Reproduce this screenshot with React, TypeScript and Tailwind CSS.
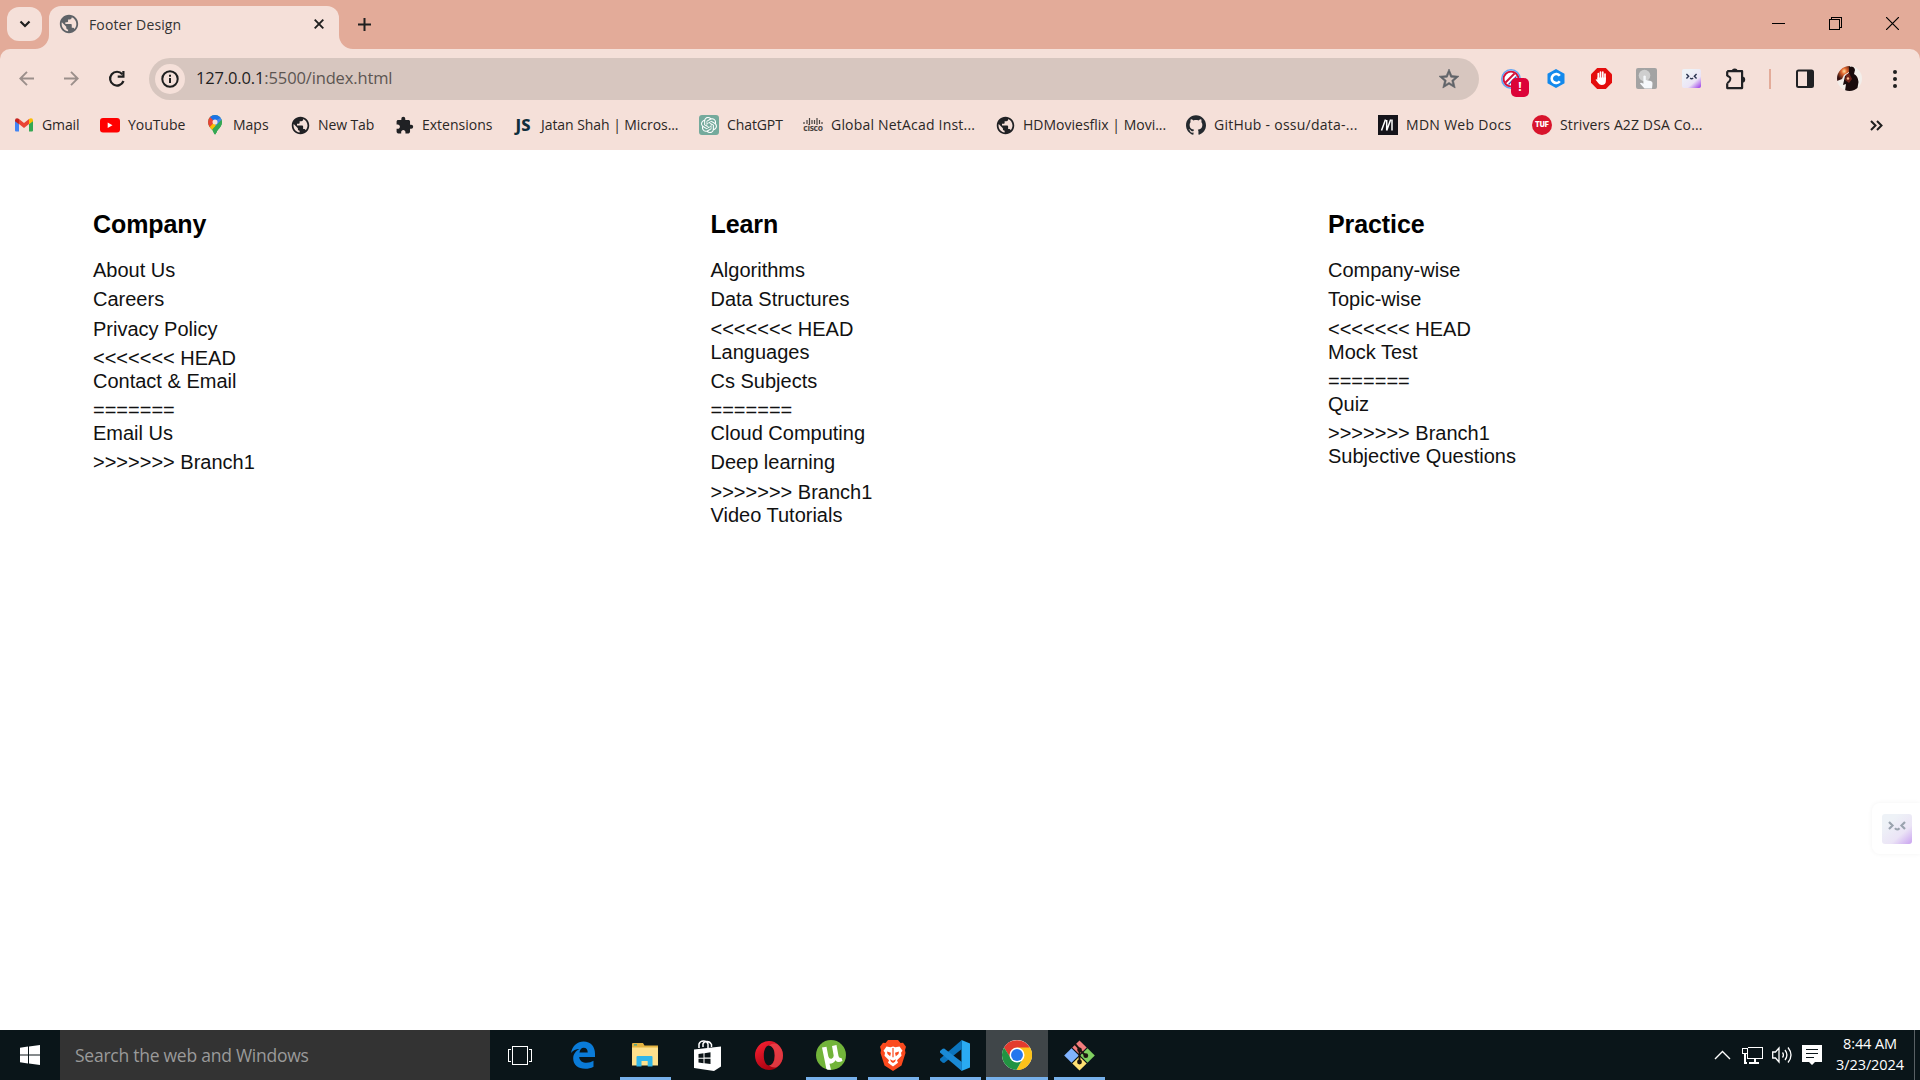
import type { ReactNode } from "react";
import { MdPublic, MdExtension, MdStarOutline } from "react-icons/md";
import { SiOpenai, SiGithub } from "react-icons/si";

/* ---------- bookmark icons ---------- */

const Gmail = () => (
  <svg width="18" height="14" viewBox="0 0 18 14">
    <path d="M0 2v10.6q0 1 1 1h3V6z" fill="#4285f4" />
    <path d="M18 2v10.6q0 1-1 1h-3V6z" fill="#34a853" />
    <path d="M4 1l5 4 5-4v5L9 10 4 6z" fill="#ea4335" />
    <path d="M0 2.4Q0 .3 2 .2 3 .2 4 1v5.2L0 3.2z" fill="#c5221f" />
    <path d="M18 2.4Q18 .3 16 .2 15 .2 14 1v5.2l4-3z" fill="#fbbc04" />
  </svg>
);
const YouTube = () => (
  <svg width="20" height="15" viewBox="0 0 20 15">
    <rect width="20" height="14.5" rx="3" fill="#f00" />
    <path d="M7.700 4.500v5.600l4.800-2.800z" fill="#fff" />
  </svg>
);
const Maps = () => (
  <svg width="14" height="20" viewBox="0 0 14 20">
    <defs>
      <clipPath id="pin">
        <path d="M7 0a7 7 0 0 1 7 7c0 3.500-2 5.500-3.800 7.600C8.600 16.500 8 19.500 7 19.500S5.400 16.500 3.800 14.600C2 12.500 0 10.500 0 7a7 7 0 0 1 7-7z" />
      </clipPath>
    </defs>
    <g clipPath="url(#pin)">
      <rect width="14" height="20" fill="#34a853" />
      <path d="M0 13L9 3l3 3-9 10H0z" fill="#fbbc04" />
      <path d="M0 0h3l4 6-6 7H0z" fill="#ea4335" />
      <path d="M2 2L7 7l6-5-3-3H4z" fill="#1a73e8" />
      <path d="M7 7l6-5 1 3-6 7z" fill="#4285f4" />
      <path d="M14 4L5 14l2 6h7z" fill="#34a853" />
    </g>
    <circle cx="7" cy="7" r="2.500" fill="#f5e0d9" />
  </svg>
);
const Gpt = () => (
  <span className="flex size-5 items-center justify-center rounded-[3px] bg-[#74aa9c]">
    <SiOpenai className="size-4 text-white" />
  </span>
);
const Cisco = () => (
  <span className="flex w-5 flex-col items-center">
    <svg width="20" height="7" viewBox="0 0 20 7">
      <path d="M1 4v2M4 2v4M6.500 0v7M9 2v4M11.500 2v4M14 0v7M16.500 2v4M19 4v2" stroke="#4a4441" strokeWidth="1.200" />
    </svg>
    <span className="-mt-px font-['Open_Sans',sans-serif] text-[8.500px] leading-[8px] font-bold tracking-[-0.300px] text-[#4a4441]">
      cisco
    </span>
  </span>
);
const Mdn = () => (
  <svg width="20" height="20" viewBox="0 0 20 20">
    <rect width="20" height="20" fill="#15141a" />
    <path d="M3.500 15.500L7.500 4.500M8.700 15.500V5M8.700 15.500L12.700 4.500M14 15.500V4.500" fill="none" stroke="#fff" strokeWidth="1.500" />
  </svg>
);
const Tuf = () => (
  <span className="flex size-5 items-center justify-center rounded-full bg-[#d8142c] font-['Inter',sans-serif] text-[7px] font-black text-white">
    TUF
  </span>
);
const Js = () => (
  <span className="font-['Noto_Sans',sans-serif] text-[16.500px] leading-none font-extrabold text-[#0f2f3d]">JS</span>
);

const bookmarks: { label: string; icon: ReactNode; w: string; track: string }[] = [
  { label: "Gmail", icon: <Gmail />, w: "w-[86px]", track: "tracking-[-0.1px]" },
  { label: "YouTube", icon: <YouTube />, w: "w-[105px]", track: "tracking-[-0.05px]" },
  { label: "Maps", icon: <Maps />, w: "w-[85px]", track: "tracking-[0px]" },
  { label: "New Tab", icon: <MdPublic className="size-[21px] shrink-0 text-[#202124]" />, w: "w-[104px]", track: "tracking-[-0.1px]" },
  { label: "Extensions", icon: <MdExtension className="size-[19px] text-[#202124]" />, w: "w-[119px]", track: "tracking-[0px]" },
  { label: "Jatan Shah | Micros...", icon: <Js />, w: "w-[186px]", track: "tracking-[-0.06px]" },
  { label: "ChatGPT", icon: <Gpt />, w: "w-[104px]", track: "tracking-[-0.1px]" },
  { label: "Global NetAcad Inst...", icon: <Cisco />, w: "w-[192px]", track: "tracking-[0.2px]" },
  { label: "HDMoviesflix | Movi...", icon: <MdPublic className="size-[21px] shrink-0 text-[#202124]" />, w: "w-[191px]", track: "tracking-[0px]" },
  { label: "GitHub - ossu/data-...", icon: <SiGithub className="size-5 text-[#24292e]" />, w: "w-[192px]", track: "tracking-[0.25px]" },
  { label: "MDN Web Docs", icon: <Mdn />, w: "w-[154px]", track: "tracking-[0.3px]" },
  { label: "Strivers A2Z DSA Co...", icon: <Tuf />, w: "w-[192px]", track: "tracking-[0.12px]" },
];

/* ---------- extension icons ---------- */

const Face = ({ size, ink }: { size: number; ink: string }) => (
  <svg width={size} height={size} viewBox="0 0 30 30">
    <defs>
      <linearGradient id={"face" + size} x1="0.3" y1="0.2" x2="1" y2="1">
        <stop offset="0" stopColor="#eef2f7" />
        <stop offset="0.550" stopColor="#ebe4f6" />
        <stop offset="1" stopColor={size > 20 ? "#c9a2f0" : "#9a35e8"} />
      </linearGradient>
    </defs>
    <rect width="30" height="30" rx="3" fill={"url(#face" + size + ")"} />
    <path d="M7 8l3.500 3.500L7 15M23 8l-3.500 3.500L23 15M13 14.200q2 2.600 4.500 0" fill="none" stroke={ink} strokeWidth="2.200" />
  </svg>
);
const Blocked = () => (
  <span className="relative">
    <svg width="20" height="20" viewBox="0 0 20 20">
      <circle cx="10" cy="10" r="9.200" fill="#fff" stroke="#5fa4f5" strokeWidth="1.600" />
      <circle cx="10" cy="10" r="7.400" fill="none" stroke="#d3123a" strokeWidth="1.900" />
      <path d="M4.500 13.500L13.500 4.500" stroke="#d3123a" strokeWidth="1.900" />
      <path d="M7.500 15.500l8-8" stroke="#3558b8" strokeWidth="1.200" />
    </svg>
    <span className="absolute top-[9px] left-[10px] flex h-[19px] w-[18px] items-center justify-center rounded-[5px] bg-[#dc0338] font-['Open_Sans',sans-serif] text-[12px] font-bold text-white">
      !
    </span>
  </span>
);
const HexC = () => (
  <svg width="18" height="19" viewBox="0 0 18 19">
    <path d="M9 0l8.500 4.700v9.600L9 19 .5 14.300V4.700z" fill="#1389ec" />
    <path d="M12.800 6.800A4.500 4.500 0 1 0 12.800 12.200" fill="none" stroke="#fff" strokeWidth="2.600" />
  </svg>
);
const AdBlock = () => (
  <svg width="21" height="21" viewBox="0 0 21 21">
    <path d="M6.200 0h8.600L21 6.200v8.600L14.800 21H6.200L0 14.800V6.200z" fill="#e40d0d" />
    <path d="M7.300 11V5.500M9.500 10V4.200M11.800 10V4.200M14 11V6" stroke="#fff" strokeWidth="1.700" strokeLinecap="round" />
    <path d="M6.400 9.500h8.500v3.500q0 4-4.300 4-2.200 0-3.200-1.700L4.600 11.700q.6-1 1.800 0z" fill="#fff" />
  </svg>
);
const Touch = () => (
  <svg width="21" height="21" viewBox="0 0 21 21">
    <rect width="21" height="21" rx="2" fill="#a3a3a3" />
    <circle cx="8.500" cy="7.500" r="5.800" fill="#cfcfcf" />
    <path d="M7.400 8q1.300-1.200 2.400 0v4l5 1q2 .6 1.700 2.700L16 20.500H8.500L4 15.500q.6-1.600 3.400.3z" fill="#f6f8fb" />
  </svg>
);
const Puzzle = () => (
  <svg width="22" height="22" viewBox="0 0 22 22">
    <path d="M2.200 3.200H17.100V20.100H2.200V15.200M2.200 8.300V3.200" fill="none" stroke="#202124" strokeWidth="2.200" strokeLinejoin="round" />
    <path d="M2.200 7.700q4 1.500 3 4-.5 2-3 3.500" fill="none" stroke="#202124" strokeWidth="2" />
    <path d="M6.700 3.500a3 3 0 0 1 6 0zM17 8.400a3.200 3.200 0 0 1 0 6.400z" fill="#202124" />
  </svg>
);
const SidePanel = () => (
  <svg width="18" height="19" viewBox="0 0 18 19">
    <rect x="1" y="1.500" width="16" height="16.500" rx="1.500" fill="none" stroke="#202124" strokeWidth="2" />
    <path d="M11 1h6v17h-6z" fill="#202124" />
  </svg>
);
const Avatar = () => (
  <svg width="25" height="25" viewBox="0 0 25 25">
    <defs>
      <clipPath id="av"><circle cx="12.500" cy="12.500" r="12.500" /></clipPath>
      <radialGradient id="glow" cx="0.550" cy="0.350" r="0.600">
        <stop offset="0" stopColor="#ffe2a0" />
        <stop offset="0.350" stopColor="#e0662e" />
        <stop offset="1" stopColor="#351010" />
      </radialGradient>
    </defs>
    <g clipPath="url(#av)">
      <rect width="25" height="25" fill="#f3eeea" />
      <path d="M3 0h10l-1 6-5 3-2 4-5 2V4z" fill="url(#glow)" />
      <path d="M12 1q5-2 6 3l-1 4q4 2 4.500 8L20 25H8l1-7-3 1 2-9 4-3z" fill="#180b0c" />
      <path d="M9 9l3-2 3 6-3 4-4-3z" fill="#6e2318" />
      <circle cx="11" cy="12.500" r="1.200" fill="#ffb98a" />
    </g>
  </svg>
);

/* ---------- taskbar icons ---------- */

const Edge = () => (
  <svg width="24" height="28" viewBox="0 0 24 28">
    <path d="M0 12C1.500 4.500 6.500.5 12.500.5 20 .5 24 6 24 12.500V16H8.200c.3 4 3.600 5.800 7.300 5.800 2.700 0 5-.7 7-2v6c-2.500 1.400-5.300 2-8.300 2C7 27.800 2.200 24 2.200 17.500 2.200 13 5 9.700 8.500 8 5 8 2 9.500 0 12zM8.500 11.500h8.200c0-3-1.400-4.700-4-4.700-2.300 0-3.800 1.800-4.200 4.700z" fill="#0a7bd8" />
  </svg>
);
const Explorer = () => (
  <svg width="26" height="24" viewBox="0 0 26 24">
    <path d="M0 1q0-1 1-1h10l1.500 2.500H26V22H0z" fill="#e3b341" />
    <path d="M0 4.500h26V22.500H0z" fill="#fde08c" />
    <path d="M2 1.200h3v1.300H2z" fill="#3aa49a" />
    <path d="M4.500 14q0-1 1-1h14q1 0 1 1v9.500h-4.800V18H9.500v5.500h-5z" fill="#2fb6ea" />
  </svg>
);
const Store = () => (
  <svg width="27" height="31" viewBox="0 0 27 31">
    <path d="M5 8V4q1-3 4.500-3T14 4v4M9 7V3.800Q10 1.500 13 1.500t4.500 3V7" fill="none" stroke="#fff" strokeWidth="1.500" />
    <path d="M0 9.500L27 6.500v20L20 31 0 28z" fill="#fff" />
    <path d="M4.500 14l5-.7v4.400h-5zM10.500 13.200l6-.9v5.300h-6zM4.500 18.800h5v4.400l-5-.7zM10.500 18.800h6v5.300l-6-.9z" fill="#0c1417" />
  </svg>
);
const Opera = () => (
  <svg width="28" height="29" viewBox="0 0 28 29">
    <defs>
      <linearGradient id="op" x1="0" y1="0" x2="0.600" y2="1">
        <stop offset="0" stopColor="#ff2234" />
        <stop offset="1" stopColor="#a3000e" />
      </linearGradient>
    </defs>
    <path fillRule="evenodd" d="M14 0a14 14.500 0 1 1 0 29 14 14.500 0 0 1 0-29zm0 4.500C10.800 4.500 8.800 9 8.800 14.500s2 10 5.200 10 5.700-4.500 5.700-10-2.500-10-5.700-10z" fill="url(#op)" />
    <path d="M14 4.500q4-3 8-1.500 6 4.500 6 11.500t-6 11.500q-4 1.500-8-1.500 5.700-1 5.700-10t-5.700-10z" fill="#ef4a50" fillOpacity="0.750" />
  </svg>
);
const Torrent = () => (
  <svg width="30" height="30" viewBox="0 0 30 30">
    <circle cx="15" cy="15" r="15" fill="#72b43a" />
    <path d="M6 7.500l4.500-.8 1.800 9.500q.8 3 3.300 2.500 2.500-.7 2-3.800l-1.600-9L20.500 5l2 11q.5 2.500 3 2l1 3q-5 2.500-7-.8-1.800 3.300-6 3.500l1.500 6q-3 .5-4.600-.8z" fill="#fff" />
  </svg>
);
const Brave = () => (
  <svg width="26" height="31" viewBox="0 0 26 31">
    <path d="M8 0h10l2.500 3L23 2.700l3 4L25 10l.5 3-4 12.500L13 31 4.500 25.500.5 13 1 10 0 6.700l3-4L5.500 3z" fill="#fb4a1e" />
    <path d="M6.500 6.500l4 .8L13 6.500l2.500.8 4-.8 3 4.200-1.500 2 .5 3-4.500 4.500 1 2.500L13 26.500l-5-3.800 1-2.500-4.500-4.500.5-3-1.500-2z" fill="#fff" />
    <path d="M7 11.500l4 1.300-.8 3.500L7.500 14zM19 11.500l-4 1.300.8 3.500 2.700-2.300zM10 19.200l3 1.500 3-1.500-1 2.500-2 1.200-2-1.200zM12.400 8h1.200v9l-.6.600-.6-.6z" fill="#fb4a1e" />
  </svg>
);
const VsCode = () => (
  <svg width="30" height="31" viewBox="0 0 30 31">
    <path d="M21.500 0L30 3.500v24L21.500 31z" fill="#2aaaf2" />
    <path d="M21.800 0v9L4.200 23l-1.500-.3L0 20.300v-1.500z" fill="#0b74bd" />
    <path d="M21.800 31v-9L4.200 8.500 2.700 8.700 0 11v1.500z" fill="#1a8ad6" />
  </svg>
);
const Chrome = () => (
  <svg width="30" height="30" viewBox="0 0 48 48">
    <circle cx="24" cy="24" r="24" fill="#fff" />
    <path d="M24 13h20.900A24 24 0 0 0 3.200 12l10.900 18z" fill="#e33b2e" />
    <path d="M33.500 29.500L23 48A24 24 0 0 0 44.800 12H24z" fill="#fcc21b" />
    <path d="M14.500 29.500L3.200 12A24 24 0 0 0 23 48l10.500-18.500z" fill="#229342" />
    <circle cx="24" cy="24" r="12" fill="#fff" />
    <circle cx="24" cy="24" r="9.500" fill="#2477ee" />
  </svg>
);
const Git = () => (
  <svg width="31" height="31" viewBox="0 0 31 31">
    <path d="M15.500 0.500l7.200 7-7.200 7-7.200-7z" fill="#f37c7c" />
    <path d="M23.500 8.200l7.300 7.300-7.300 7.300-7.300-7.300z" fill="#80cf60" />
    <path d="M7.500 8.200l7.300 7.300-7.300 7.300L.2 15.500z" fill="#80b3ff" />
    <path d="M15.500 16.500l7.200 7-7.200 7-7.200-7z" fill="#ffe173" />
    <path d="M11 4l4.500 5v13M15.500 9.500l6 6" stroke="#1c1410" strokeWidth="1.900" fill="none" />
    <circle cx="15.500" cy="9.800" r="2.300" fill="#1c1410" />
    <circle cx="21.800" cy="15.700" r="2.400" fill="#1c1410" />
    <circle cx="15.500" cy="22" r="2.400" fill="#1c1410" />
  </svg>
);

const tasks: { name: string; icon: ReactNode; open?: boolean; active?: boolean }[] = [
  { name: "Edge", icon: <Edge /> },
  { name: "File Explorer", icon: <Explorer />, open: true },
  { name: "Store", icon: <Store /> },
  { name: "Opera", icon: <Opera /> },
  { name: "uTorrent", icon: <Torrent />, open: true },
  { name: "Brave", icon: <Brave />, open: true },
  { name: "VS Code", icon: <VsCode />, open: true },
  { name: "Chrome", icon: <Chrome />, open: true, active: true },
  { name: "Git Bash", icon: <Git />, open: true },
];

/* ---------- page content ---------- */

const HEAD = "<<<<<<< HEAD";
const SEP = "=======";
const BRANCH = ">>>>>>> Branch1";

/* tight rows are bare text lines that sit directly above the next link */
const columns: { title: string; rows: { text: string; tight?: boolean }[] }[] = [
  {
    title: "Company",
    rows: [
      { text: "About Us" },
      { text: "Careers" },
      { text: "Privacy Policy" },
      { text: HEAD, tight: true },
      { text: "Contact & Email" },
      { text: SEP, tight: true },
      { text: "Email Us" },
      { text: BRANCH },
    ],
  },
  {
    title: "Learn",
    rows: [
      { text: "Algorithms" },
      { text: "Data Structures" },
      { text: HEAD, tight: true },
      { text: "Languages" },
      { text: "Cs Subjects" },
      { text: SEP, tight: true },
      { text: "Cloud Computing" },
      { text: "Deep learning" },
      { text: BRANCH, tight: true },
      { text: "Video Tutorials" },
    ],
  },
  {
    title: "Practice",
    rows: [
      { text: "Company-wise" },
      { text: "Topic-wise" },
      { text: HEAD, tight: true },
      { text: "Mock Test" },
      { text: SEP, tight: true },
      { text: "Quiz" },
      { text: BRANCH, tight: true },
      { text: "Subjective Questions" },
    ],
  },
];

const Slot = ({ children }: { children: ReactNode }) => (
  <div className="flex w-[45px] shrink-0 items-center justify-center">{children}</div>
);

function TabStrip() {
  return (
    <div className="flex h-[49px] bg-[#e3ab99] pl-[7px]">
      <div className="mt-[7px] flex h-[34px] w-[35px] items-center justify-center rounded-[12px] bg-[#f5e0d9]">
        <svg width="12" height="8" viewBox="0 0 12 8">
          <path d="M1.500 1.500L6 6l4.500-4.500" fill="none" stroke="#1f1f1f" strokeWidth="2.200" />
        </svg>
      </div>
      <div className="relative mt-[6px] ml-[7px] flex w-[290px] items-center rounded-t-[12px] bg-[#f5e0d9] pb-[7px] pl-[9px]">
        <svg className="absolute bottom-0 -left-[14px]" width="14" height="14"><path d="M14 0v14H0A14 14 0 0 0 14 0z" fill="#f5e0d9" /></svg>
        <svg className="absolute -right-[14px] bottom-0" width="14" height="14"><path d="M0 0v14h14A14 14 0 0 1 0 0z" fill="#f5e0d9" /></svg>
        <MdPublic className="size-[22px] text-[#5f6368]" />
        <span className="ml-[9px] text-[14px] tracking-[0.120px] whitespace-nowrap text-[#333]">Footer Design</span>
        <svg className="mr-[15px] ml-auto" width="10" height="10" viewBox="0 0 10 10">
          <path d="M.7.7l8.600 8.600M9.300.7L.7 9.300" stroke="#1f1f1f" strokeWidth="1.900" />
        </svg>
      </div>
      <svg className="mt-[17.500px] ml-[19px]" width="13" height="13" viewBox="0 0 13 13">
        <path d="M6.500 0v13M0 6.500h13" stroke="#1f1f1f" strokeWidth="2" />
      </svg>
      <div className="mt-[17px] mr-[21px] ml-auto flex gap-[44px]">
        <svg width="13" height="13" shapeRendering="crispEdges"><path d="M0 6.500h13" stroke="#000" /></svg>
        <svg width="13" height="13" shapeRendering="crispEdges">
          <path d="M.5 2.500h10v10H.5zM2.500 2.500v-2h10v10h-2" fill="none" stroke="#000" />
        </svg>
        <svg width="13" height="13"><path d="M0 0l13 13M13 0L0 13" stroke="#000" strokeWidth="1.200" /></svg>
      </div>
    </div>
  );
}

function Toolbar() {
  return (
    <div className="bg-[#e3ab99]">
      <div className="flex h-[59px] items-center rounded-t-[10px] bg-[#f5e0d9] pl-[19px]">
        <svg width="15" height="15" viewBox="0 0 15 15">
          <path d="M15 7.500H1.500M8 .8L1.300 7.500 8 14.200" fill="none" stroke="#9b8f8b" strokeWidth="1.900" />
        </svg>
        <svg className="ml-[30px]" width="15" height="15" viewBox="0 0 15 15">
          <path d="M0 7.500h13.500M7 .8l6.700 6.700L7 14.200" fill="none" stroke="#9b8f8b" strokeWidth="1.900" />
        </svg>
        <svg className="ml-[29px]" width="18" height="18" viewBox="0 0 18 18">
          <path d="M14.300 4.200A6.900 6.900 0 1 0 15.500 11" fill="none" stroke="#1f1f1f" strokeWidth="2.200" />
          <path d="M16.500 1v6.800H9.700V5.600h4.600V1z" fill="#1f1f1f" />
        </svg>
        <div className="ml-[23px] flex h-[42px] w-[1330px] items-center rounded-full bg-[#d7c6bf] pl-[6px]">
          <div className="flex size-[30px] items-center justify-center rounded-full bg-[#f5e0d9]">
            <svg width="18" height="18" viewBox="0 0 18 18">
              <circle cx="9" cy="9" r="7.700" fill="none" stroke="#1f1f1f" strokeWidth="2" />
              <path d="M9 8v5M9 4.700v2" stroke="#1f1f1f" strokeWidth="2" />
            </svg>
          </div>
          <span className="ml-[11px] text-[16.500px] tracking-[-0.140px] whitespace-nowrap text-[#5c5552]">
            <span className="text-[#1f1f1f]">127.0.0.1</span>:5500/index.html
          </span>
          <MdStarOutline className="mr-[18px] ml-auto size-[24px] stroke-[#5f6368] stroke-[0.600px] text-[#5f6368]" />
        </div>
        <div className="ml-[9.500px] flex items-center">
          <Slot><Blocked /></Slot>
          <Slot><HexC /></Slot>
          <Slot><AdBlock /></Slot>
          <Slot><Touch /></Slot>
          <Slot><Face size={19} ink="#2b3450" /></Slot>
          <Slot><Puzzle /></Slot>
        </div>
        <div className="ml-[10.500px] h-[20px] w-[2px] bg-[#e3ab99]" />
        <div className="ml-[11px] flex items-center">
          <Slot><SidePanel /></Slot>
          <Slot><Avatar /></Slot>
          <Slot>
            <svg width="4" height="18" viewBox="0 0 4 18" fill="#1f1f1f">
              <circle cx="2" cy="2" r="2" /><circle cx="2" cy="9" r="2" /><circle cx="2" cy="16" r="2" />
            </svg>
          </Slot>
        </div>
      </div>
    </div>
  );
}

function BookmarkBar() {
  return (
    <div className="flex h-[42px] items-center bg-[#f5e0d9] pb-[8px] pl-[14px]">
      {bookmarks.map((b) => (
        <div key={b.label} className={`flex shrink-0 items-center ${b.w}`}>
          <span className="flex w-5 shrink-0 items-center justify-center">{b.icon}</span>
          <span className={`-mt-[2px] ml-2 text-[14px] whitespace-nowrap text-[#2b2725] ${b.track}`}>{b.label}</span>
        </div>
      ))}
      <svg className="mr-[37px] ml-auto" width="13" height="11" viewBox="0 0 13 11">
        <path d="M1 1l4.500 4.500L1 10M7 1l4.500 4.500L7 10" fill="none" stroke="#1f1f1f" strokeWidth="2" />
      </svg>
    </div>
  );
}

function Taskbar() {
  return (
    <div className="flex h-[50px] bg-[#0a1519]">
      <div className="flex w-[60px] items-center justify-center">
        <svg width="20" height="20" viewBox="0 0 20 20" fill="#fff">
          <path d="M0 2.800L8 1.600V9.500H0zM9 1.500L20 0v9.500H9zM0 10.500h8v7.900l-8-1.200zM9 10.500h11V20L9 18.500z" />
        </svg>
      </div>
      <div className="flex w-[430px] items-center bg-[#333] pl-[15px] text-[17.500px] text-[#9a9a9a]">
        <span className="tracking-[-0.250px] whitespace-nowrap">Search the web and Windows</span>
      </div>
      <div className="flex w-[62px] items-center justify-center pr-[2px]">
        <svg width="24" height="19" shapeRendering="crispEdges" fill="none" stroke="#fff">
          <path d="M4.500.5h15v18h-15zM3 3.500H.5v12H3M21 3.500h2.500v12H21" />
        </svg>
      </div>
      {tasks.map((t) => (
        <div key={t.name} className={`relative flex w-[62px] items-center justify-center ${t.active ? "bg-[#404649]" : ""}`}>
          {t.icon}
          {t.open && <div className={`absolute bottom-0 h-[3px] bg-[#76b0ea] ${t.active ? "w-full" : "w-[51px]"}`} />}
        </div>
      ))}
      <div className="ml-auto flex items-center text-white">
        <svg width="17" height="10" viewBox="0 0 17 10"><path d="M1 9l7.500-7.500L16 9" fill="none" stroke="#fff" strokeWidth="1.400" /></svg>
        <svg className="ml-[11px]" width="21" height="18" fill="none" stroke="#fff" shapeRendering="crispEdges">
          <path d="M6 1.500h14.500v11H5.500V8M.5 2.500h5v5h-5zM3 8v9.500M2 17h3M13 13v4M7 17h10" strokeWidth="1.400" />
        </svg>
        <svg className="ml-[9px]" width="21" height="18" viewBox="0 0 21 18" fill="none" stroke="#fff" strokeWidth="1.300">
          <path d="M.7 6h2.800L7 2v14l-3.500-4H.7zM10.500 6.500q1.800 2.500 0 5M13 4q3.800 5 0 10M16 1.500q6 7.500 0 15" />
        </svg>
        <svg className="ml-[9px]" width="20" height="20" viewBox="0 0 20 20">
          <path d="M0 0h20v17h-7l-3 3-3-3H0z" fill="#fff" />
          <path d="M4 4.500h12M4 8.500h12M4 12.500h8" stroke="#0a1519" strokeWidth="1.200" />
        </svg>
        <div className="-mt-[3px] ml-[9px] w-[78px] text-center text-[14.500px] leading-[21px] tracking-[-0.100px]">
          <div>8:44 AM</div>
          <div>3/23/2024</div>
        </div>
      </div>
      <div className="mr-[5px] ml-[5px] w-px bg-[#596064]" />
    </div>
  );
}

export default function App() {
  return (
    <div className="flex h-[1080px] w-[1920px] flex-col overflow-hidden bg-white font-['Open_Sans','Noto_Sans',sans-serif]">
      <TabStrip />
      <Toolbar />
      <BookmarkBar />
      <main className="relative grow font-['Liberation_Sans',Arial,sans-serif] text-black">
        <div className="grid grid-cols-[617.500px_617.500px_1fr] pt-[60px] pl-[93px]">
          {columns.map((c) => (
            <section key={c.title}>
              <h2 className="mb-[20px] text-[25px] leading-[29px] font-bold tracking-[-0.100px]">{c.title}</h2>
              <ul className="text-[20px] leading-[23px] text-[#111]">
                {c.rows.map((r) => (
                  <li key={r.text} className={r.tight ? "" : "mb-[6.250px]"}>{r.text}</li>
                ))}
              </ul>
            </section>
          ))}
        </div>
        <div className="absolute top-[653px] right-0 flex h-[51px] w-[48px] items-center rounded-l-[8px] bg-white pl-[10px] shadow-[0_0_5px_rgba(0,0,0,0.05)]">
          <Face size={30} ink="#9aa3ae" />
        </div>
      </main>
      <Taskbar />
    </div>
  );
}
